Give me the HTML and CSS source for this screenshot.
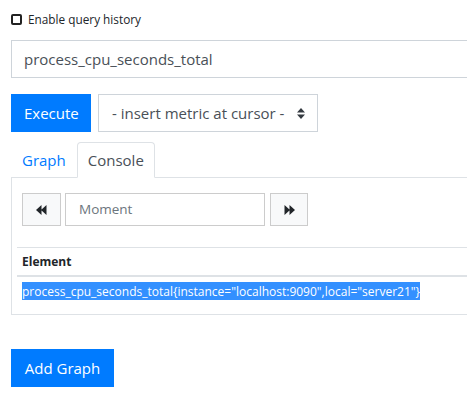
FILE: index.html
```html
<!DOCTYPE html>
<html>
<head>
<meta charset="utf-8">
<link rel="stylesheet" href="styles.css">
</head>
<body>
<div class="page">
  <label class="history">
    <span class="checkbox"></span>
    <span>Enable query history</span>
  </label>
  <div class="expr">process_cpu_seconds_total</div>
  <div class="controls">
    <button class="btn btn-primary">Execute</button>
    <div class="select">
      <span>- insert metric at cursor -</span>
      <svg class="updown" width="8" height="11" viewBox="0 0 8 11"><path d="M4 0 L8 4.5 L0 4.5 Z M0 6.5 L8 6.5 L4 11 Z" fill="#343a40"/></svg>
    </div>
  </div>
  <div class="tabs">
    <div class="tab">Graph</div>
    <div class="tab active">Console</div>
  </div>
  <div class="tab-content">
    <div class="time">
      <button class="btn-light">
        <svg width="11" height="10" viewBox="0 0 11 10"><path d="M0 5 L5.5 0 L5.5 10 Z M5 5 L10.5 0 L10.5 10 Z" fill="#212529"/></svg>
      </button>
      <div class="moment">Moment</div>
      <button class="btn-light next">
        <svg width="11" height="10" viewBox="0 0 11 10"><path d="M0.5 0 L6 5 L0.5 10 Z M5.5 0 L11 5 L5.5 10 Z" fill="#212529"/></svg>
      </button>
    </div>
    <table class="results">
      <thead><tr><th>Element</th></tr></thead>
      <tbody><tr><td><span class="sel">process_cpu_seconds_total{instance="localhost:9090",local="server21"}</span></td></tr></tbody>
    </table>
  </div>
  <div class="footer">
    <button class="btn btn-primary">Add Graph</button>
  </div>
</div>
</body>
</html>
```
FILE: styles.css
```css
html, body {
  margin: 0;
  padding: 0;
  overflow: hidden;
  background: #fff;
}
body {
  font-family: "Open Sans", "Noto Sans", sans-serif;
  color: #212529;
}
.page {
  padding: 0 0 0 11px;
  width: 600px;
}
.history {
  display: flex;
  align-items: center;
  gap: 6px;
  height: 12px;
  margin-top: 13px;
  font-size: 11.8px;
}
.checkbox {
  width: 7px;
  height: 7px;
  border: 2px solid #222;
  border-radius: 2px;
}
.expr {
  margin-top: 15px;
  height: 36px;
  border: 1px solid #ced4da;
  padding: 0 12px;
  font-size: 15px;
  line-height: 36px;
  color: #495057;
}
.controls {
  display: flex;
  gap: 7px;
  margin-top: 16px;
}
.btn {
  font-family: inherit;
  font-size: 15px;
  border: 1px solid #007bff;
  height: 38px;
  padding: 0 12px;
  line-height: 36px;
  white-space: nowrap;
  cursor: pointer;
}
.btn-primary {
  background: #007bff;
  color: #fff;
}
.controls .btn { width: 80px; }
.select {
  height: 36px;
  border: 1px solid #ced4da;
  display: flex;
  align-items: center;
  justify-content: space-between;
  padding: 0 12px 0 13px;
  box-sizing: content-box;
  font-size: 15px;
  color: #495057;
  width: 193px;
}
.tabs {
  display: flex;
  margin-top: 10px;
  border-bottom: 1px solid #dee2e6;
}
.tab {
  font-size: 15px;
  line-height: 24px;
  padding: 5px 10px;
  border: 1px solid transparent;
  border-bottom: none;
  color: #007bff;
  margin-bottom: -1px;
  border-radius: 4px 4px 0 0;
}
.tab.active {
  color: #495057;
  border-color: #dee2e6;
  background: #fff;
  border-bottom: 1px solid #fff;
}
.tab-content {
  border-left: 1px solid #dee2e6;
  border-bottom: 1px solid #dee2e6;
  padding: 15px 0 9px 5px;
}
.time {
  display: flex;
  gap: 4px;
  margin-left: 5px;
}
.btn-light {
  width: 39px;
  height: 33px;
  background: #f8f9fa;
  border: 1px solid #ccc;
  display: flex;
  align-items: center;
  justify-content: center;
  padding: 0;
}
.btn-light.next {
  width: 38px;
  margin-left: 1px;
}
.moment {
  width: 185px;
  height: 31px;
  border: 1px solid #ccc;
  padding: 0 0 0 13px;
  font-size: 13.5px;
  line-height: 31px;
  color: #6c757d;
}
.results {
  margin-top: 21px;
  width: 100%;
  border-collapse: collapse;
  font-size: 12px;
}
.results th {
  text-align: left;
  border-top: 1px solid #dee2e6;
  border-bottom: 2px solid #dee2e6;
  padding: 5px;
  height: 17px;
  font-weight: bold;
}
.results td {
  padding: 5px;
  line-height: 18px;
}
.sel {
  background: #3390ff;
  color: #fff;
  padding: 0.5px 0;
}
.footer {
  margin-top: 34px;
}
.footer .btn {
  width: 103px;
  padding: 0;
}
```
